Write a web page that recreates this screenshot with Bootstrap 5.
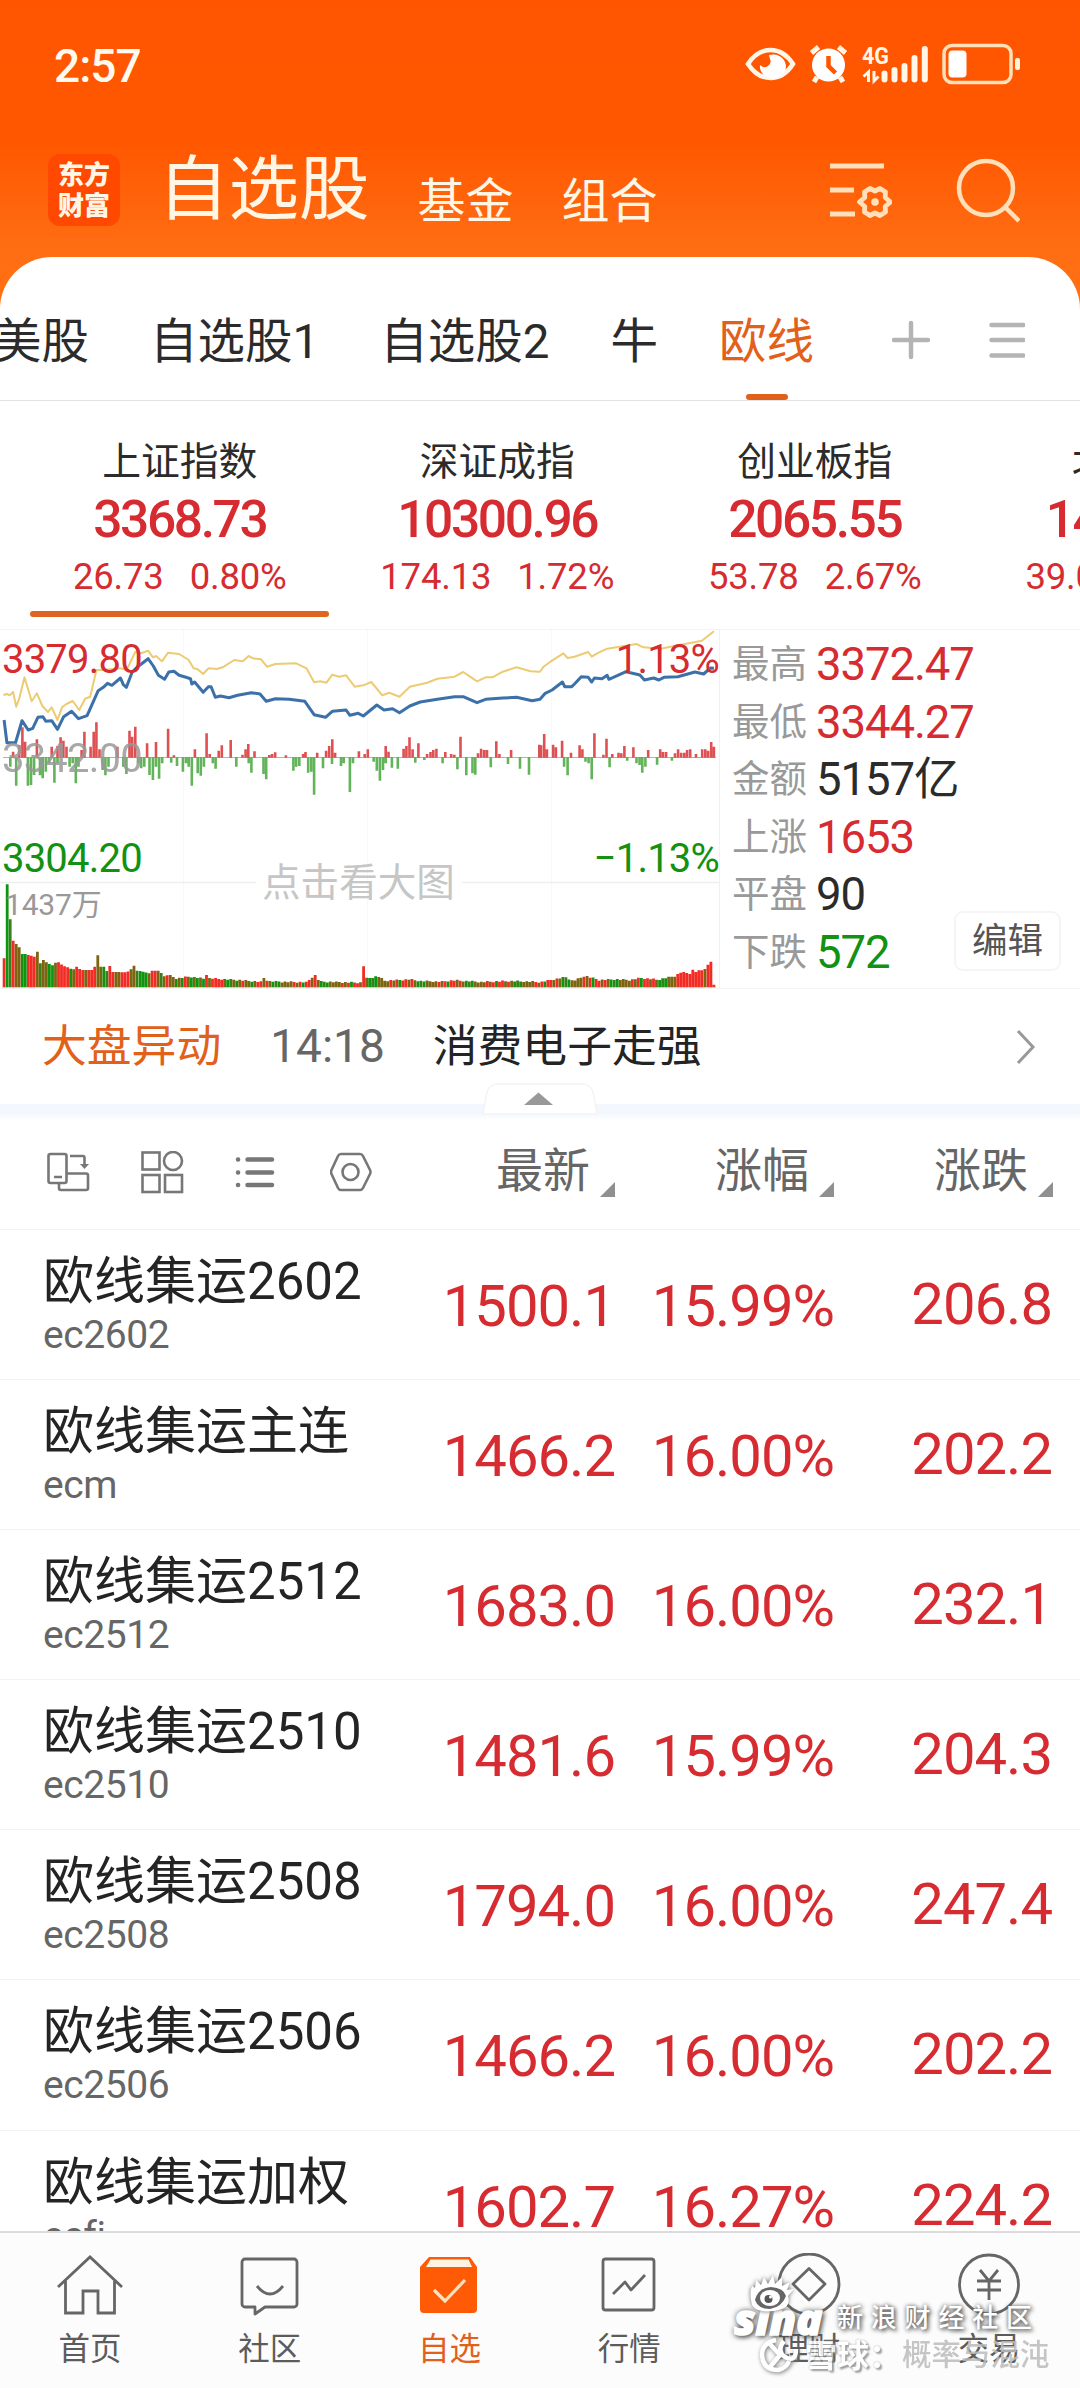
<!DOCTYPE html>
<html lang="zh-CN">
<head>
<meta charset="utf-8">
<meta name="viewport" content="width=device-width, initial-scale=1">
<title>自选股</title>
<link href="https://cdn.jsdelivr.net/npm/bootstrap@5.3.0/dist/css/bootstrap.min.css" rel="stylesheet">
<style>
:root{--up:#d62b30;--down:#129112;--brand:#e2611a}
body{width:1080px;height:2388px;overflow:hidden;font-family:Roboto,"Noto Sans CJK SC",sans-serif;color:#2b2b2b;background:linear-gradient(#ff5500 0,#ff5700 140px,#ff6e14 250px,#ff7010 310px)}
svg{display:block;flex:none}
.up{color:var(--up)}.down{color:var(--down)}
/* status bar and title bar */
.status{height:128px;padding:0 59px 0 54px;color:#fff9ef}
.clock{font-size:46px;font-weight:500;letter-spacing:-1px;line-height:1;padding-top:3px}
.titlebar{height:129px;padding:0 60px 0 48px;color:#fff6e6}
.logo{width:72px;height:72px;border-radius:12px;background:#ff4800;font:900 26px/31px "Noto Sans CJK SC",sans-serif;margin-top:-6px;padding-top:3px}
.t-main{font-size:70.5px;line-height:80px;margin:-6px 0 0 38px}
.t-sub{font-size:48px;line-height:60px;margin-top:18px}
/* sheet */
.sheet{height:1974px;border-radius:52px 52px 0 0;background:#fff;overflow:hidden}
.tabs{height:144px;border-bottom:1px solid #e3e3e3;padding-right:55px}
.tabs .strip{gap:61px;margin-left:-6px;font-size:47.5px;line-height:170px;height:143px}
.tabs .on{color:var(--brand);position:relative}
.tabs .on::after{content:"";position:absolute;left:27px;bottom:0;width:42px;height:6px;border-radius:3px;background:var(--brand)}
.indices{height:229px;padding-left:21px;border-bottom:1px solid #f4f4f4}
.idx{width:317.5px;flex:none;padding-top:36px}
.idx .nm{font-size:38.8px;line-height:50px}
.idx .v{font-size:51.5px;font-weight:500;letter-spacing:-2.4px;line-height:60px;padding-top:3px}
.idx .c{font-size:36.5px;line-height:46px;letter-spacing:-.2px;gap:26px;margin-top:4px}
.idx.on::after{content:"";display:block;width:299px;height:6px;border-radius:3px;background:#df6420;margin:11px auto 0}
.market{height:359px;border-bottom:1px solid #f4f4f4}
.chart{width:720px;border-right:1px solid #f1f1f1;position:relative}
.chart .lb{position:absolute;font-size:40px;line-height:40px;letter-spacing:-.8px}
.stats{padding:6px 19px 0 12px}
.stats .r{height:57.6px;line-height:57px;font-size:37.5px}
.stats .k{color:#999;width:84px;flex:none}
.stats .n{font-size:45.5px;letter-spacing:-1.1px}
.edit{position:absolute;right:19px;bottom:17px;width:107px;height:60px;border:2px solid #f5f5f5;border-radius:9px;font-size:35.5px;line-height:57px;color:#555;background:#fff}
.news{height:115px;padding:0 44px 0 42px;font-size:44.8px;position:relative;line-height:119px}
.band{height:15px;background:linear-gradient(#f3f8fe 60%,#fcfdff)}
.handle{position:absolute;left:479px;top:94px}
.cols{height:111px;border-bottom:1px solid #f3f3f3;color:#666}
.cols .icons{width:449px;gap:50.5px;padding-left:46px;flex:none}
.cols .h{font-size:47px;line-height:98px;width:219px;gap:10px;padding-right:27px;height:111px}
.cols .h span{margin-top:-6px}
.cols .h svg{margin-top:30px}
.stock{height:150.1px;border-bottom:1px solid #f3f3f3}
.stock .id{width:400px;padding:24px 0 0 43px;flex:none}
.stock .nm{font-size:51px;line-height:56px;color:#242424}
.stock .cd{font-size:39px;line-height:46px;color:#666;letter-spacing:-.4px;margin-top:2px}
.stock .q{font-size:58px;letter-spacing:-1px;line-height:153px}
.stock .p1{width:215px}.stock .p2{width:219px}.stock .p3{width:218px;line-height:149px}
/* bottom navigation */
.foot{height:157px;border-top:2px solid #dcdcdf;background:#fdfcfd;position:relative}
.foot .it{width:179.8px;padding-top:20px;color:#5c5c5c;font-size:31.5px;line-height:40px}
.foot .it svg{margin:0 auto 13px}
.foot .on{color:var(--brand)}
.wm{position:absolute;white-space:nowrap;line-height:1;color:#fff;text-shadow:0 0 4px #555,2px 2px 4px #666}
.wm-sina{left:734px;top:56px;font:italic 800 43px/60px "Open Sans",sans-serif;-webkit-text-stroke:1.5px #fff;text-shadow:0 0 6px #444,2px 2px 5px #555}
.wm-eye{position:absolute;left:746px;top:40px}
.wm-cn{left:837px;top:72px;font-size:26px;font-weight:500;letter-spacing:7.8px}
.wm-xq{left:805px;top:107px;font-size:32px;font-weight:700;text-shadow:0 0 2px #999,2px 2px 2px #888;opacity:.85}
.wm-au{left:902px;top:108px;font-size:29.5px;font-weight:500;color:#bcbcbc;text-shadow:none;opacity:.85}
</style>
<script src="https://cdn.jsdelivr.net/npm/bootstrap@5.3.0/dist/js/bootstrap.bundle.min.js"></script>
</head>
<body>
<header>
  <div class="status d-flex align-items-center justify-content-between">
    <div class="clock">2:57</div>
    <svg width="276" height="42" viewBox="746 43 276 42" fill="none" stroke="#fff6e8">
      <path d="M749 64Q758 50 771.500 50Q785 50 794 64Q785 78 771.500 78Q758 78 749 64Z" stroke-width="4.500"/>
      <path d="M770 55a13 12 0 1 1-9 10q4 4 8 1q4-3 2-7q-1-3-1-4z" fill="#fff" stroke="none"/>
      <circle cx="829.500" cy="65" r="16.500" fill="#fff" stroke="none"/>
      <path d="M812.500 53l7-6M846.500 53l-7-6M818 77l-3 5M841 77l3 5" stroke-width="5"/>
      <path d="M829.500 56v10l7 7" stroke="#ff5500" stroke-width="4.500"/>
      <text x="863" y="63.500" font-size="24" font-weight="700" fill="#fff6e8" stroke="none" textLength="27" lengthAdjust="spacingAndGlyphs">4G</text>
      <path d="M869.500 82V72l-5 4.500M875 71v10l4.500-4.500" stroke-width="3"/>
      <path d="M885.500 79.500v-6M895.500 79.500V70M905.500 79.500V66M915.500 79.500V58M925.800 79.500V49" stroke-width="6" stroke-linecap="round"/>
      <rect x="945" y="45.500" width="67" height="37" rx="8" stroke="#ffe0b8" stroke-width="3.500"/>
      <rect x="949.500" y="50.500" width="18" height="27" rx="4" fill="#fff" stroke="none"/>
      <rect x="1016" y="58" width="5" height="12" rx="2" fill="#fff1dc" stroke="none"/>
    </svg>
  </div>
  <div class="titlebar d-flex align-items-center">
    <div class="logo text-center">东方<br>财富</div>
    <div class="t-main">自选股</div>
    <div class="t-sub" style="margin-left:48px">基金</div>
    <div class="t-sub" style="margin-left:48px">组合</div>
    <svg class="ms-auto" width="64" height="62" viewBox="829 159 64 62" fill="none" stroke="#ffe0ba" stroke-width="4.800" style="margin-top:-4px">
      <path d="M831 165h54M831 189h24M831 213h25"/>
      <path d="M871 187.500l5 2.500 5-2.500 5.500 3.500-.3 5.500 5.300 4.500-5.300 4.500.3 5.500-5.500 3.500-5-2.500-5 2.500-5.500-3.500.3-5.500-5.300-4.500 5.300-4.500-.3-5.500z" stroke-linejoin="round"/>
      <circle cx="876" cy="201" r="3.800" fill="#ffe0ba" stroke="none"/>
    </svg>
    <svg width="64" height="66" viewBox="957 156 64 66" fill="none" stroke="#ffe0ba" stroke-width="4.500" style="margin:-4px 0 0 64px">
      <circle cx="987" cy="186" r="27"/><path d="M1006 205l14 14"/>
    </svg>
  </div>
</header>

<main class="sheet">
  <nav class="tabs d-flex align-items-center">
    <div class="strip d-flex text-nowrap"><span>美股</span><span>自选股1</span><span>自选股2</span><span>牛</span><span class="on">欧线</span></div>
    <svg class="ms-auto" width="133" height="44" viewBox="893 318 133 44" stroke="#b4b4b4" stroke-width="4.500" stroke-linecap="round" style="margin-top:22px">
      <path d="M895 340h34M912 323v34M992.500 325h32M992.500 340h32M992.500 355.500h32"/>
    </svg>
  </nav>

  <section class="indices d-flex overflow-hidden text-nowrap">
    <div class="idx on text-center"><div class="nm">上证指数</div><div class="v up">3368.73</div><div class="c up d-flex justify-content-center"><span>26.73</span><span>0.80%</span></div></div>
    <div class="idx text-center"><div class="nm">深证成指</div><div class="v up">10300.96</div><div class="c up d-flex justify-content-center"><span>174.13</span><span>1.72%</span></div></div>
    <div class="idx text-center"><div class="nm">创业板指</div><div class="v up">2065.55</div><div class="c up d-flex justify-content-center"><span>53.78</span><span>2.67%</span></div></div>
    <div class="idx text-center"><div class="nm">北证50</div><div class="v up">1403.27</div><div class="c up d-flex justify-content-center"><span>39.06</span><span>2.86%</span></div></div>
  </section>

  <section class="market d-flex position-relative">
    <div class="chart">
      <svg width="719" height="358" viewBox="0 0 719 358" id="chart">
        <path d="M183.500 0V358M367.500 0V358M551.500 0V358" stroke="#f8f8f8"/>
        <path d="M0 252.500H256M462 252.500H720" stroke="#eee" stroke-width="1.500"/>
        <path d="M3 127.500H716" stroke="#c9a9a9"/>
      </svg>
      <span class="lb up" style="left:2px;top:10px">3379.80</span>
      <span class="lb up" style="right:0;top:10px">1.13%</span>
      <span class="lb" style="left:2px;top:109px;color:#999;opacity:.85">3342.00</span>
      <span class="lb down" style="left:2px;top:209px">3304.20</span>
      <span class="lb down" style="right:0;top:209px">−1.13%</span>
      <span class="lb" style="left:5px;top:255px;font-size:30px;color:#999;letter-spacing:-.2px">1437万</span>
      <span class="lb" style="left:262px;top:233px;font-size:38.600px;color:#c6c6c6;letter-spacing:0">点击看大图</span>
    </div>
    <div class="stats flex-grow-1">
      <div class="r d-flex"><span class="k">最高</span><span class="n up">3372.47</span></div>
      <div class="r d-flex"><span class="k">最低</span><span class="n up">3344.27</span></div>
      <div class="r d-flex"><span class="k">金额</span><span class="n">5157亿</span></div>
      <div class="r d-flex"><span class="k">上涨</span><span class="n up">1653</span></div>
      <div class="r d-flex"><span class="k">平盘</span><span class="n">90</span></div>
      <div class="r d-flex"><span class="k">下跌</span><span class="n down">572</span></div>
    </div>
    <div class="edit text-center">编辑</div>
  </section>

  <section class="news d-flex align-items-center text-nowrap">
    <span style="color:var(--brand)">大盘异动</span>
    <span style="color:#666;font-size:46px;margin-left:49px">14:18</span>
    <span class="flex-grow-1" style="margin-left:48px;color:#242424">消费电子走强</span>
    <svg width="20" height="36" viewBox="0 0 20 36" fill="none" stroke="#999" stroke-width="3"><path d="M2 2l15 16L2 34"/></svg>
    <svg class="handle" width="122" height="32" viewBox="0 0 122 32"><path d="M4 31L8 9Q10 2 18 1H104Q112 2 114 9L118 31Z" fill="#fff" stroke="#f4f4f4" stroke-width="1.500"/><path d="M45 22L59.500 9.500L74 22Z" fill="#999"/></svg>
  </section>
  <div class="band"></div>

  <section class="cols d-flex align-items-center">
    <div class="icons d-flex" style="margin-top:-2px">
      <svg width="44" height="44" viewBox="0 0 44 44" fill="none" stroke="#777" stroke-width="2.600"><rect x="2.500" y="3" width="18" height="29" rx="2"/><path d="M21 22.500H40a2 2 0 0 1 2 2V37a2 2 0 0 1-2 2H15a2 2 0 0 1-2-2V32M24 5H37q1.500 0 1.500 2V16M8 26h8"/><path d="M34 13l4.500 5 4.500-5z" fill="#777" stroke="none"/></svg>
      <svg width="44" height="44" viewBox="0 0 44 44" fill="none" stroke="#777" stroke-width="2.600"><rect x="1.500" y="1.500" width="17" height="17"/><circle cx="32" cy="10" r="9"/><rect x="1.500" y="24" width="17" height="17"/><rect x="24" y="24" width="17" height="17"/></svg>
      <svg width="44" height="44" viewBox="0 0 44 44" stroke="#777" stroke-width="4.500" stroke-linecap="round"><path d="M3 8.500h.1M3 21.500h.1M3 34h.1M12.500 8.500H37M12.500 21.500H37M12.500 34H37" /></svg>
      <svg width="44" height="44" viewBox="0 0 44 44" fill="none" stroke="#777" stroke-width="2.600" stroke-linejoin="round"><path d="M11 3H30Q32 3 33 5L40 19Q41 21 40 23L33 37Q32 39 30 39H11Q9 39 8 37L1.500 23Q.5 21 1.500 19L8 5Q9 3 11 3Z"/><circle cx="20.500" cy="21" r="8"/></svg>
    </div>
    <div class="h d-flex justify-content-end align-items-center" style="width:193px"><span>最新</span><svg width="15" height="15"><path d="M15 0V15H0Z" fill="#909090"/></svg></div>
    <div class="h d-flex justify-content-end align-items-center"><span>涨幅</span><svg width="15" height="15"><path d="M15 0V15H0Z" fill="#909090"/></svg></div>
    <div class="h d-flex justify-content-end align-items-center"><span>涨跌</span><svg width="15" height="15"><path d="M15 0V15H0Z" fill="#909090"/></svg></div>
  </section>

  <section id="list">
    <div class="stock d-flex"><div class="id"><div class="nm">欧线集运2602</div><div class="cd">ec2602</div></div><div class="q up text-end p1">1500.1</div><div class="q up text-end p2">15.99%</div><div class="q up text-end p3">206.8</div></div>
    <div class="stock d-flex"><div class="id"><div class="nm">欧线集运主连</div><div class="cd">ecm</div></div><div class="q up text-end p1">1466.2</div><div class="q up text-end p2">16.00%</div><div class="q up text-end p3">202.2</div></div>
    <div class="stock d-flex"><div class="id"><div class="nm">欧线集运2512</div><div class="cd">ec2512</div></div><div class="q up text-end p1">1683.0</div><div class="q up text-end p2">16.00%</div><div class="q up text-end p3">232.1</div></div>
    <div class="stock d-flex"><div class="id"><div class="nm">欧线集运2510</div><div class="cd">ec2510</div></div><div class="q up text-end p1">1481.6</div><div class="q up text-end p2">15.99%</div><div class="q up text-end p3">204.3</div></div>
    <div class="stock d-flex"><div class="id"><div class="nm">欧线集运2508</div><div class="cd">ec2508</div></div><div class="q up text-end p1">1794.0</div><div class="q up text-end p2">16.00%</div><div class="q up text-end p3">247.4</div></div>
    <div class="stock d-flex"><div class="id"><div class="nm">欧线集运2506</div><div class="cd">ec2506</div></div><div class="q up text-end p1">1466.2</div><div class="q up text-end p2">16.00%</div><div class="q up text-end p3">202.2</div></div>
    <div class="stock d-flex"><div class="id"><div class="nm">欧线集运加权</div><div class="cd">ecfi</div></div><div class="q up text-end p1">1602.7</div><div class="q up text-end p2">16.27%</div><div class="q up text-end p3">224.2</div></div>
  </section>
</main>

<footer class="foot d-flex text-center">
  <div class="it"><svg width="68" height="64" viewBox="0 0 68 64" fill="none" stroke="#666" stroke-width="2.800"><path d="M2 34L34 4L66 34M9.500 28V60H27V38H42V60H58.500V28"/></svg>首页</div>
  <div class="it"><svg width="68" height="64" viewBox="0 0 68 64" fill="none" stroke="#666" stroke-width="2.800" stroke-linejoin="round"><path d="M9 6H58a3 3 0 0 1 3 3V51a3 3 0 0 1-3 3H29L19 61V54H9a3 3 0 0 1-3-3V9a3 3 0 0 1 3-3ZM21 33Q34 49 47 33"/></svg>社区</div>
  <div class="it on"><svg width="68" height="64" viewBox="0 0 68 64"><path d="M14 4H55L62 14V56a4 4 0 0 1-4 4H9a4 4 0 0 1-4-4V14Z" fill="#ff5a05"/><path d="M15.500 6.500H53.500L57 14H11Z" fill="#fff3e2"/><path d="M19 37L30 48L50 27" fill="none" stroke="#ffe2bd" stroke-width="3.200"/></svg>自选</div>
  <div class="it"><svg width="68" height="64" viewBox="0 0 68 64" fill="none" stroke="#666" stroke-width="2.800" stroke-linejoin="round"><rect x="8" y="6" width="51" height="51" rx="2.500"/><path d="M18 41L30 29L36 37L50 22"/></svg>行情</div>
  <div class="it"><svg width="68" height="64" viewBox="0 0 68 64" fill="none" stroke="#666" stroke-width="2.800" stroke-linejoin="round"><circle cx="34" cy="31" r="30"/><path d="M34 15.500L50 31L34 47L18 31Z"/></svg>理财</div>
  <div class="it"><svg width="68" height="64" viewBox="0 0 68 64" fill="none" stroke="#666" stroke-width="2.800"><circle cx="34" cy="31.500" r="29.500"/><path d="M25 17L34 28L43 17M22 28H46M22 37H46M34 28V47"/></svg>交易</div>
  <div class="wm wm-sina">sina</div>
  <svg class="wm-eye" width="56" height="42" viewBox="0 0 56 42" style="filter:drop-shadow(0 0 2px #666)"><path d="M6 32Q3 20 6 13l3 2 1-8 5 5 3-8 4 7 5-9 2 9 7-7 0 9 8-4-3 8 7-1-6 7Q46 36 28 38Q10 40 6 32Z" fill="#fff"/><path d="M9 27Q12 15 25 14Q38 15 40 23Q36 34 24 36Q12 36 9 27Z" fill="#666"/><ellipse cx="24" cy="25" rx="10" ry="8" fill="#fff"/><circle cx="22.500" cy="26" r="4" fill="#555"/><circle cx="24.500" cy="24" r="1.500" fill="#fff"/></svg>
  <div class="wm wm-cn">新浪财经社区</div>
  <svg class="position-absolute" style="left:758px;top:103px;filter:drop-shadow(1px 1px 2px #777)" width="46" height="38" viewBox="0 0 46 38" fill="none" stroke="#fff" stroke-width="4.500"><path d="M18 4Q4 7 4 19Q5 34 20 34Q29 32 31 25M10 6L22 19L12 31M26 5Q18 15 27 21Q38 27 38 13"/></svg>
  <div class="wm wm-xq">雪球：</div>
  <div class="wm wm-au">概率与混沌</div>
</footer>

<script>
// Chart data is kept on a 2076-unit wide time axis and scaled down to the 720px plot.
const KX=.3444,KY=1/3,svg=document.getElementById('chart');
const X=v=>(v*KX).toFixed(1),Y=v=>(v*KY-10).toFixed(1);
const add=(d,a)=>{const p=document.createElementNS('http://www.w3.org/2000/svg','path');p.setAttribute('d',d);for(const k in a)p.setAttribute(k,a[k]);svg.appendChild(p)};
const parse=s=>s.trim().split(/\s+/).map(t=>t.split(',').map(Number));
const bars=(s,base)=>parse(s).map(([x,y])=>`M${X(x)} ${Y(base)}V${Y(y)}`).join('');
const up='38,395 56,375 65,322 73,365 107,358 150,380 167,378 176,352 184,362 193,380 237,390 245,335 263,380 272,335 280,307 289,388 341,380 376,332 384,350 393,320 427,370 453,366 488,326 505,406 566,388 600,340 609,402 635,392 644,376 670,360 704,404 713,388 721,372 739,394 782,405 790,402 799,397 830,406 880,402 887,396 921,398 947,392 956,378 965,358 973,398 1042,394 1059,402 1068,388 1120,378 1128,395 1172,386 1180,378 1189,352 1198,388 1215,370 1240,402 1250,396 1258,390 1267,386 1293,396 1310,402 1319,404 1337,350 1388,400 1397,386 1406,390 1414,390 1441,364 1450,402 1484,390 1566,374 1571,376 1580,342 1588,388 1606,374 1614,382 1632,362 1658,398 1683,376 1691,388 1726,340 1752,404 1761,356 1778,402 1796,398 1804,400 1813,378 1839,382 1882,390 1917,388 1925,396 1934,396 1960,400 1969,388 1978,398 1987,398 1995,390 2004,388 2021,402 2039,388 2048,388 2056,392 2065,366 2073,380';
const dn='30,440 47,497 81,497 90,495 99,465 116,466 124,475 133,455 142,430 158,488 167,430 202,440 211,430 220,490 228,440 298,450 306,466 315,440 358,440 367,462 401,430 410,445 419,440 434,465 444,480 453,440 462,476 471,430 497,428 514,438 531,455 540,430 548,440 557,497 574,460 583,467 592,440 618,430 626,446 686,440 722,430 730,458 765,462 773,478 852,452 860,440 869,438 895,458 904,455 912,524 938,445 964,432 990,438 998,430 1016,516 1025,430 1085,425 1094,452 1103,482 1112,450 1120,430 1138,443 1155,446 1206,428 1232,420 1285,430 1328,448 1354,466 1372,460 1380,464 1425,442 1475,432 1510,446 1536,464 1638,440 1648,466 1700,425 1709,430 1718,478 1770,442 1821,422 1848,430 1857,435 1865,458 1874,440 1908,434 1951,422';
add(bars(dn,411),{stroke:'#62b35a','stroke-width':2.6});
add(bars(up,413),{stroke:'#df5052','stroke-width':2.6});
const env=parse('12,1015 21,793 30,898 38,962 47,972 56,982 64,1002 73,1002 99,1010 107,995 116,1030 124,1020 150,1036 158,1028 167,1027 193,1042 211,1048 220,1040 237,1050 263,1050 271,1040 280,1006 289,1050 297,1040 306,1053 315,1053 323,1038 332,1056 367,1057 384,1048 393,1037 402,1052 437,1060 446,1052 463,1052 481,1070 488,1065 514,1075 550,1070 592,1076 600,1063 609,1075 640,1077 690,1080 760,1086 766,1074 780,1084 890,1087 912,1066 930,1085 1051,1088 1060,1038 1068,1075 1095,1070 1120,1082 1190,1078 1220,1083 1280,1085 1320,1081 1400,1086 1480,1083 1568,1086 1600,1080 1640,1072 1665,1082 1700,1068 1740,1080 1790,1078 1830,1080 1860,1074 1910,1079 1960,1068 1976,1057 2000,1060 2011,1050 2020,1055 2035,1051 2045,1045 2053,1035 2064,1024 2073,1096');
const tone='rgormmggrrrmommggmrrrrgmrrrmrrrmmgorrmmrrrmmogggmrrmomrmmgmgrmgmgmgrmrrrrmgomgmrmmgm';
const col={r:'#f22b24',g:'#0f940f',m:'#7c6411',o:'#39801a'},vol={r:'',g:'',m:'',o:''};
let seg=0;
for(let i=0;i<236;i++){
  const x=12+i*8.77;
  while(seg<env.length-2&&env[seg+1][0]<x-.5)seg++;
  const a=env[seg],b=env[seg+1],t=Math.min(1,Math.max(0,(x-a[0])/(b[0]-a[0])));
  let y=Math.abs(x-b[0])<4.5?b[1]:Math.abs(x-a[0])<4.5?a[1]:a[1]+(b[1]-a[1])*t;
  if(i>50)y+=(i*7%5)-2;
  let k=i==1?'g':i>222&&i%4?'r':tone[(i<tone.length?i:(i*5+(i>>2))%tone.length)];
  vol[k]+=`M${X(x)} ${Y(1103)}V${Y(y)}`;
}
for(const k in vol)add(vol[k],{stroke:col[k],'stroke-width':2.8});
add('M3 357.700H716',{stroke:'#f6dd9a','stroke-width':1});
const line=s=>'M'+parse(s).map(([x,y])=>X(x)+' '+Y(y)).join('L');
add(line('10,225 20,222 28,226 38,216 47,260 56,235 71,172 92,244 107,220 123,258 139,276 150,262 167,300 180,262 193,252 211,243 230,270 247,236 262,230 280,150 300,150 350,145 367,150 376,132 393,96 410,100 430,92 444,112 453,108 470,124 488,98 520,102 548,120 562,145 574,148 590,162 605,145 630,147 650,140 680,120 705,124 722,108 735,115 758,118 775,140 800,132 860,130 890,145 912,187 930,184 948,188 965,164 985,170 1005,166 1030,200 1055,196 1078,186 1110,226 1130,218 1160,230 1190,200 1240,188 1270,176 1320,170 1345,156 1365,170 1385,184 1410,172 1430,172 1460,155 1500,142 1540,154 1568,155 1578,140 1598,125 1636,100 1648,114 1668,110 1708,96 1718,110 1738,98 1763,86 1848,72 1868,82 1918,86 1968,76 2008,68 2038,62 2073,34'),{fill:'none',stroke:'#eccb72','stroke-width':2,'stroke-linejoin':'round'});
add(line('12,300 20,368 45,368 64,302 82,330 95,325 110,292 125,290 133,304 150,302 167,328 185,290 208,274 228,296 253,287 285,212 300,202 312,190 325,196 350,174 358,194 367,202 384,156 400,140 430,116 445,138 460,166 478,178 490,156 505,154 520,166 540,172 553,176 557,192 565,186 590,217 605,200 613,200 625,232 640,228 665,233 690,226 730,218 755,222 773,244 800,236 840,238 885,244 912,284 945,292 965,274 1005,270 1016,286 1040,280 1055,288 1094,255 1115,270 1140,266 1160,278 1190,258 1220,246 1270,238 1320,230 1345,230 1385,248 1410,238 1460,234 1500,232 1545,242 1568,238 1583,220 1603,210 1633,186 1640,200 1660,200 1668,192 1688,170 1708,172 1718,186 1726,174 1748,176 1763,166 1768,178 1818,155 1858,165 1871,180 1898,174 1913,180 1928,172 1968,170 2018,156 2043,162 2063,144 2073,145'),{fill:'none',stroke:'#3c70a8','stroke-width':3,'stroke-linejoin':'round'});
</script>
</body>
</html>
